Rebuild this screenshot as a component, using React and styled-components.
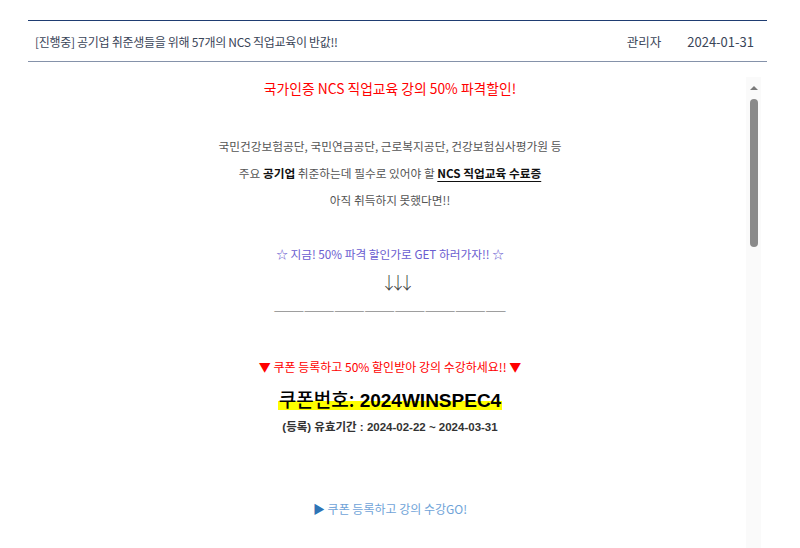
import React from "react";
import styled, { createGlobalStyle } from "styled-components";

const GlobalStyle = createGlobalStyle`
	html, body {
		margin: 0;
		padding: 0;
		background: #fff;
		overflow: hidden;
	}
	body {
		font-family: "Noto Sans CJK KR", "Noto Sans", sans-serif;
	}
`;

const Board = () => {
	return (
		<>
			<GlobalStyle />
			<Container>
				<Header>
					<Title>[진행중] 공기업 취준생들을 위해 57개의 NCS 직업교육이 반값!!</Title>
					<Meta>
						<span>관리자</span>
						<span>2024-01-31</span>
					</Meta>
				</Header>

				<Frame>
					<Body>
						<Line h={22} size={13.8} color="#ff0000">
							국가인증 NCS 직업교육 강의 50% 파격할인!
						</Line>
						<Gap h={33} />
						<Line>국민건강보험공단, 국민연금공단, 근로복지공단, 건강보험심사평가원 등</Line>
						<Line>
							주요 <Strong>공기업</Strong> 취준하는데 필수로 있어야 할{" "}
							<Strong underline>NCS 직업교육 수료증</Strong>
						</Line>
						<Line>아직 취득하지 못했다면!!</Line>
						<Gap h={27} />
						<Line color="#6a5cd0">☆ 지금! 50% 파격 할인가로 GET 하러가자!! ☆</Line>
						<Arrows>↓↓↓</Arrows>
						<Dashes>———————————————————————</Dashes>
						<Gap h={29} />
						<Line size={12} color="#ff0000">
							▼ 쿠폰 등록하고 50% 할인받아 강의 수강하세요!! ▼
						</Line>
						<Coupon>
							<Highlight>
								<Label>쿠폰번호:</Label> <b>2024WINSPEC4</b>
							</Highlight>
						</Coupon>
						<Period>(등록) 유효기간 : 2024-02-22 ~ 2024-03-31</Period>
						<Gap h={58} />
						<Line size={12} color="#6fa3d8">
							<Tri>▶</Tri> 쿠폰 등록하고 강의 수강GO!
						</Line>
					</Body>

					<ScrollTrack>
						<UpArrow />
						<Thumb />
					</ScrollTrack>
				</Frame>
			</Container>
		</>
	);
};

export default function App() {
	return <Board />;
}

const Container = styled.div`
	width: 739px;
	margin: 20px 0 0 28px;
`;

const Header = styled.div`
	display: flex;
	align-items: center;
	justify-content: space-between;
	height: 40px;
	border-top: 1px solid #1f3d72;
	border-bottom: 1px solid #8592aa;
	padding: 0 13px 0 7px;
	color: #3a4558;
	font-size: 12px;
`;

const Title = styled.div`
	letter-spacing: -0.3px;
`;

const Meta = styled.div`
	display: flex;
	align-items: center;
	gap: 26px;
	font-size: 12.5px;

	span:last-child {
		font-size: 13px;
	}
`;

const Frame = styled.div`
	display: flex;
	margin-top: 15px;
	width: 733px;
	height: 472px;
	overflow: hidden;
`;

const Body = styled.div`
	flex: 1;
	display: flex;
	flex-direction: column;
	align-items: center;
	padding-left: 6px;
`;

const ScrollTrack = styled.div`
	width: 15px;
	flex-shrink: 0;
	background: #fafafa;
	display: flex;
	flex-direction: column;
	align-items: center;
`;

const UpArrow = styled.div`
	width: 0;
	height: 0;
	margin: 9px 0 9px;
	border-left: 4px solid transparent;
	border-right: 4px solid transparent;
	border-bottom: 4px solid #7a7a7a;
`;

const Thumb = styled.div`
	width: 8px;
	height: 148px;
	border-radius: 4px;
	background: #8a8a8a;
	margin-left: 1px;
`;

const Line = styled.p`
	margin: 0;
	height: ${(p) => p.h || 27}px;
	line-height: ${(p) => p.h || 27}px;
	font-size: ${(p) => p.size || 11.7}px;
	color: ${(p) => p.color || "#555"};
	white-space: nowrap;
`;

const Gap = styled.div`
	height: ${(p) => p.h}px;
	flex-shrink: 0;
`;

const Strong = styled.b`
	color: #111;
	font-weight: 700;
	text-decoration: ${(p) => (p.underline ? "underline" : "none")};
	text-underline-offset: 3px;
`;

const Arrows = styled.p`
	margin: 0;
	height: 30px;
	line-height: 30px;
	font-size: 17px;
	font-weight: 300;
	color: #444;
	letter-spacing: -8px;
	padding-left: 8px;
`;

const Dashes = styled.p`
	margin: 0;
	height: 27px;
	line-height: 27px;
	font-size: 12.3px;
	color: #888;
	white-space: nowrap;
`;

const Coupon = styled.p`
	margin: 0;
	height: 37px;
	line-height: 37px;
	font-family: "Liberation Sans", "Noto Sans CJK KR", sans-serif;
	font-size: 19px;
	color: #000;
	white-space: nowrap;
`;

const Label = styled.span`
	font-family: "Noto Sans CJK KR", sans-serif;
	font-weight: 500;
`;

const Highlight = styled.span`
	background: linear-gradient(transparent 52%, #ffff00 52%, #ffff00 94%, transparent 94%);
	padding: 0 1px;
`;

const Period = styled.p`
	margin: 0;
	height: 20px;
	line-height: 20px;
	font-family: "Liberation Sans", "Noto Sans CJK KR", sans-serif;
	font-size: 11.5px;
	font-weight: 700;
	color: #333;
	white-space: nowrap;
`;

const Tri = styled.span`
	color: #2e74b5;
`;
